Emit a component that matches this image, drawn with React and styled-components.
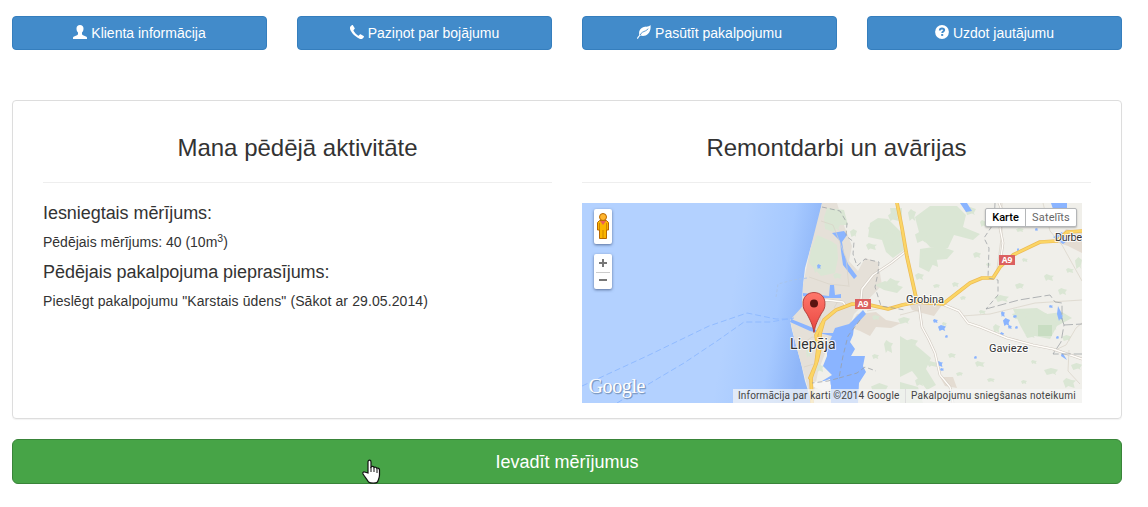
import React from 'react';
import styled, { createGlobalStyle } from 'styled-components';

const Global = createGlobalStyle`
  * { box-sizing: border-box; }
  body { margin: 0; background: #fff; color: #333; font: 14px/20px "Liberation Sans", Arial, sans-serif; }
`;
const Page = styled.main`
  width: 1134px; height: 507px; padding: 16px 12px 0; overflow: hidden;
`;
const Nav = styled.nav`
  display: grid; grid-template-columns: repeat(4, 1fr); gap: 30px; margin-bottom: 50px;
`;
const NavButton = styled.button`
  display: flex; align-items: center; justify-content: center; gap: 4px;
  height: 34px; padding: 0; color: #fff; background: #428bca;
  border: 1px solid #357ebd; border-radius: 4px; font: inherit;
  svg { width: 14px; height: 14px; margin-top: -2px; flex: none; }
`;
const Label = styled.span`white-space: nowrap;`;
const Panel = styled.section`
  display: grid; grid-template-columns: 1fr 1fr; gap: 30px; height: 319px; padding: 34px 30px 0;
  border: 1px solid #ddd; border-radius: 4px; box-shadow: 0 1px 1px rgba(0,0,0,.05);
`;
const Column = styled.div`min-width: 0;`;
const Title = styled.h3`
  margin: 0; height: 48px; font-size: 24px; line-height: 26px; font-weight: 400; text-align: center;
  border-bottom: 1px solid #eee; margin-bottom: 20px;
`;
const Subtitle = styled.h4`
  margin: 0 0 9px; font-size: 18px; line-height: 20px; font-weight: 400; letter-spacing: -.05px;
`;
const Text = styled.p`
  margin: 0 0 10px; line-height: 20px; letter-spacing: ${(p) => p.$track || 0}px;
  sup { font-size: 10.5px; line-height: 0; position: relative; vertical-align: baseline; top: -.5em; }
`;
const Submit = styled.button`
  position: relative; display: block; width: 100%; height: 45px; margin-top: 20px; padding: 0; color: #fff;
  background: #47a447; border: 1px solid #398439; border-radius: 6px;
  font: 18px/24px "Liberation Sans", Arial, sans-serif;
`;
const Pointer = styled.svg`position: absolute; left: 348px; top: 19px; width: 20px; height: 25px;`;

const MapFrame = styled.div`
  position: relative; width: 500px; height: 200px; overflow: hidden; background: #b3d1ff;
  font-family: Roboto, sans-serif;
`;
const MapDrawing = styled.svg`display: block; width: 500px; height: 200px;`;
const Controls = styled.div`
  position: absolute; left: 12px; top: 6px; display: flex; flex-direction: column; gap: 10px;
`;
const Control = styled.div`
  width: 18px; height: 35px; background: #fff; border-radius: 2px;
  box-shadow: 0 1px 3px rgba(60,80,120,.75); display: flex; flex-direction: column; align-items: center;
`;
const MapTypes = styled.div`
  position: absolute; right: 5px; top: 5px; display: flex; height: 19px; background: #fff;
  border: 1px solid #b4b6b8; border-radius: 2px; box-shadow: 0 1px 2px rgba(0,0,0,.25);
`;
const MapType = styled.span`
  width: ${(p) => p.$w}px; text-align: center; font-size: 11px; line-height: 18px;
  color: ${(p) => (p.$active ? '#000' : '#666')}; font-weight: ${(p) => (p.$active ? 500 : 400)};
  letter-spacing: ${(p) => (p.$active ? 0 : 0.15)}px;
  & + & { border-left: 1px solid #b4b6b8; }
`;
const Attribution = styled.div`
  position: absolute; right: 0; bottom: 0; display: flex; width: 349px; height: 14px; padding-left: 5px;
  background: rgba(245,245,245,.72); color: #444; font-size: 10px; line-height: 14px; white-space: nowrap;
`;
const Credit = styled.span`
  width: ${(p) => p.$w}px; letter-spacing: ${(p) => p.$track}px;
  & + & { padding-left: 5px; border-left: 1px solid #ddd; }
`;

const UserIcon = () => (
  <svg viewBox="0 0 14 14" fill="#fff"><path d="M3.500 3.500C3.500 1.300 4.800 0 7 0s3.500 1.300 3.500 3.500c0 1.800-.6 3.200-1.500 4.100v1.200c0 .7.400 1.200 1 1.500l3 1.200c.7.300 1 .7 1 1.300V14H0v-1.200c0-.6.300-1 1-1.300l3-1.200c.6-.3 1-.8 1-1.500V7.600C4.100 6.700 3.500 5.300 3.500 3.500Z" /></svg>
);
const PhoneIcon = () => (
  <svg viewBox="0 0 14 14" fill="#fff"><path d="M.2 1.800 1.800.2c.4-.4.800-.3 1.100.1l1.700 2.700c.3.400.2.800-.1 1.100L3.400 5.200c.6 1.800 3.400 4.800 5.200 5.500l1.200-1.200c.4-.3.800-.4 1.200-.1l2.600 1.700c.4.300.5.700.2 1.100l-1.500 1.500c-.8.600-1.900.3-3.200-.3C5.500 12 1.300 8 .2 4.600-.2 3.400-.1 2.400.2 1.800Z" /></svg>
);
const LeafIcon = () => (
  <svg viewBox="0 0 14 14"><path fill="#fff" d="M13.500 0c.5 3.600-.4 6.600-2.400 8.700-1.900 2-4.600 2.600-7.400 1.900-1.100.6-1.900 1.700-2.500 2.900-.2.500-1.400.4-1.200-.2.300-1.100 1.200-2.200 2.300-3.400C1.600 6.800 2.500 4.500 4.700 2.900 7.100 1.200 11.700 2.300 13.500 0Z" /><path d="M3.200 10.100c1-3 3.400-3.300 5.200-4.200 1.200-.6 2-1.300 2.900-2.300" fill="none" stroke="#428bca" strokeWidth=".85" /></svg>
);
const QuestionIcon = () => (
  <svg viewBox="0 0 14 14"><circle cx="7" cy="7" r="6.900" fill="#fff" /><path fill="none" stroke="#428bca" strokeWidth="1.900" d="M4.800 5.500C4.800 4 5.600 3.500 7 3.500s2.200.6 2.200 1.600c0 1.500-2 1.400-2 2.900" /><path fill="#428bca" d="M6.200 9h2v1.900h-2z" /></svg>
);

// Small wooded patches: x, y, width, height.
const woods = [
  [306, 10, 12, 8], [286, 22, 14, 9], [301, 29, 12, 13], [284, 40, 11, 7], [326, 6, 8, 12], [333, 28, 12, 12],
  [340, 46, 18, 18], [333, 70, 9, 7], [383, 4, 11, 8], [398, 17, 8, 7], [391, 49, 8, 6], [351, 81, 7, 4],
  [305, 75, 13, 12], [290, 112, 8, 5], [316, 114, 12, 7], [302, 137, 9, 13], [290, 151, 7, 5], [289, 180, 17, 12],
  [315, 185, 17, 13], [333, 175, 9, 8], [323, 136, 13, 7], [345, 158, 11, 6], [366, 150, 8, 5], [374, 169, 7, 4],
  [393, 158, 10, 6], [405, 175, 8, 4], [386, 190, 12, 7], [417, 187, 8, 10], [439, 177, 6, 4], [462, 165, 14, 7],
  [481, 175, 13, 10], [466, 190, 9, 7], [489, 160, 11, 7], [449, 157, 6, 4], [413, 92, 14, 7], [433, 80, 9, 6],
  [462, 71, 10, 7], [476, 85, 9, 7], [430, 109, 17, 7], [452, 108, 13, 9], [468, 117, 7, 10], [443, 130, 11, 5],
  [397, 107, 7, 4], [411, 121, 7, 9], [493, 54, 7, 12], [484, 65, 8, 5], [434, 25, 8, 4], [447, 15, 9, 7],
  [440, 55, 6, 4], [370, 79, 7, 5], [378, 93, 6, 4], [360, 119, 5, 4], [404, 60, 5, 3], [480, 132, 9, 6],
  [234, 161, 8, 8], [224, 143, 5, 12], [246, 17, 13, 11], [231, 58, 10, 12], [251, 70, 9, 6], [268, 26, 7, 8],
];
const ponds = [
  [351, 116, 5, 4], [356, 122, 8, 6], [363, 132, 3, 3], [419, 108, 4, 6], [421, 115, 7, 8], [431, 112, 4, 3],
  [426, 122, 4, 4], [418, 129, 4, 5], [433, 123, 3, 3], [467, 102, 4, 3], [453, 25, 3, 3], [435, 45, 2, 4],
  [355, 158, 6, 6], [358, 165, 4, 3], [474, 133, 3, 3], [477, 111, 4, 6], [235, 61, 4, 5], [392, 153, 3, 3],
];
const patch = ([x, y, w, h], i) => {
  const k = (i % 3) * 0.12;
  return `M${x} ${y + h * 0.3}L${x + w * (0.25 + k)} ${y}L${x + w * 0.65} ${y + h * (0.2 - k / 2)}L${x + w} ${y + h * 0.25}L${x + w * 0.8} ${y + h * (0.5 + k)}L${x + w * 0.9} ${y + h}L${x + w * (0.4 + k)} ${y + h * 0.8}L${x + w * 0.2} ${y + h}Z`;
};
const coast = 'M240 0L237 15 233 31 228 47 223 65 221 82 220 104 216 112 208 117 210 127 214 142 219 160 223 178 230 200';
const highway = 'M230 200L229 175 235 158 238 145 238 131 242 117 254 107 270 101 288 102 306 106 320 102 335 99 361 101 388 80 400 75 411 75 418 64 431 52 458 39 475 38 485 29 500 28';
const northRoad = 'M315 0L320 25 325 54 335 99';
const bypass = 'M242 117L234 132 236 145 234 161 228 175';

const MapArtwork = () => (
  <MapDrawing viewBox="0 0 500 200">
    <defs>
      <linearGradient id="sea" gradientUnits="userSpaceOnUse" x1="150" y1="90" x2="228" y2="104">
        <stop stopColor="#b3d1ff" /><stop offset=".6" stopColor="#a6c9ff" /><stop offset="1" stopColor="#8fb6f8" />
      </linearGradient>
      <linearGradient id="pin" x2="0" y2="1"><stop stopColor="#ff776b" /><stop offset="1" stopColor="#e84640" /></linearGradient>
    </defs>
    <rect width="500" height="200" fill="url(#sea)" />
    <path d={`${coast}H500V0Z`} fill="#f0efea" />
    <path d="M240 0L228 47 221 82 220 104 208 117 214 142 230 200 236 169 247 140 267 125 272 111 282 101 300 82 296 59 283 55 276 68 267 58 270 43 261 20 255 0Z" fill="#e5e0d8" />
    <path d="M267 124L275 111 294 109 304 117 319 120 309 125 294 124 288 133 278 128ZM326 99L343 96 360 102 352 113 340 110 330 107ZM358 174L371 174 375 185 363 183ZM474 39L484 26 500 28 500 50 486 43Z" fill="#e4dcd2" />
    <g fill="#dae6d4">
      <path d="M245 5L262 7 266 22 257 22 252 29 243 26 242 14ZM235 32L249 38 255 42 256 55 253 70 239 73 227 60 229 46ZM288 20L296 15 306 16 319 29 322 47 311 55 304 49 300 37 286 34ZM333 14L348 3 375 3 384 12 381 24 398 31 391 37 372 32 366 45 348 44 338 33ZM338 46L358 43 372 48 365 56 353 57 347 69 337 64ZM318 133L336 144 349 155 344 166 354 182 345 187 330 168 318 174ZM318 179L336 184 341 200 318 200ZM308 5H320V15L309 12ZM293 82L303 78 321 84 315 90 302 87ZM431 106L455 105 465 111 480 109 490 115 475 123 468 136 443 131 438 122Z" />
      <path d={woods.map(patch).join('')} />
      <path d="M456 122h14v11h-14z" fill="#c8ddc2" />
    </g>
    <g fill="#8ab4ff">
      <path d="M250 30L262 28 265 32 260 39 262 51 266 61 275 73 272 76 261 62 259 48 258 38ZM221 90L247 93 248 82 252 82 253 92 259 91 259 95 231 95 221 93ZM209 116L229 124 239 130 251 130 253 125 267 121 281 107 284 111 272 124 271 132 268 139 273 146 269 153 277 153 283 153 281 163 284 169 277 180 276 200 249 200 249 182 240 178 250 172 241 163 245 153 245 143 250 133 228 128 208 119Z" />
      <path d="M378 0H385L390 8 384 9ZM469 0H485V5L471 6ZM471 34L480 29 485 38 481 41ZM476 103L480 111 477 118 475 111ZM480 149L485 157 479 153Z" />
      <path d={ponds.map(patch).join('')} />
    </g>
    <path d="M242 178L248 176 249 185 243 189 230 183 230 179Z" fill="#f7f6f4" />
    <g fill="none" stroke="#d8d2c7" strokeWidth=".7">
      <path d="M239 18L251 22 264 55 267 84M227 74L247 81 266 83M221 96L240 108 237 122M256 98L252 105M285 108L308 104M318 112L337 107M380 113L408 111 453 100 500 97M420 0V28L415 66M461 0L468 28 480 42 500 78M487 147L486 168 498 181M471 148L484 142 494 125 500 120M220 141L230 134 240 135M222 164L235 160" />
    </g>
    <g fill="none" strokeLinecap="round" strokeLinejoin="round">
      <path d="M323 49L309 60 291 72 280 86 279 96M221 98L245 97 261 99 264 103M337 103L340 124 347 137 353 150 358 172 368 184 371 200M360 101L377 108 386 120 398 124 425 135 451 142 471 146 500 156M417 0L422 12 418 25 421 40 418 62" stroke="#d0c9c1" strokeWidth="2.600" />
      <path d="M323 49L309 60 291 72 280 86 279 96M221 98L245 97 261 99 264 103M337 103L340 124 347 137 353 150 358 172 368 184 371 200M360 101L377 108 386 120 398 124 425 135 451 142 471 146 500 156M417 0L422 12 418 25 421 40 418 62" stroke="#fffdf9" strokeWidth="1.400" />
      <path d={highway + northRoad + bypass} stroke="#ecba55" strokeWidth="3.700" />
      <path d={highway + northRoad + bypass} stroke="#fbd565" strokeWidth="2.300" />
    </g>
    <g fill="none" stroke="#9a9da1" strokeWidth=".75" strokeDasharray="5 3">
      <path d="M240 4L258 8 265 20 264 33 272 39 271 51 275 63 283 56 297 59 296 70 293 84 299 103 323 107M278 117L266 133 261 153 257 175 246 178 230 180M257 175L275 170 283 164 294 168M413 0L412 20 402 35 407 45 406 75 416 77 416 92 404 106" />
      <path d="M404 106L437 97 468 92 473 99 480 100 480 116 482 122 479 139 471 151H500M482 122L500 121" strokeDasharray="9 3" />
    </g>
    <g fill="none" stroke="#8cb8ff" strokeWidth=".9" strokeDasharray="6 3">
      <path d="M0 183L65 153 127 123 165 110 194 116 211 116M35 200L70 179 102 160 135 138 162 119 188 119 212 115" />
      <path d="M225 75L211 77 196 81 194 94" stroke="#a9c3e8" strokeDasharray="3 2" />
    </g>
    <g fontFamily='"Open Sans", sans-serif' fontWeight="700" fontSize="8.500" fill="#fff" textAnchor="middle">
      <path d="M273 96h16v10h-16zM417 52h16v10h-16z" fill="#db6060" />
      <text x="281" y="104">A9</text><text x="425" y="60">A9</text>
    </g>
    <g fontFamily="Roboto, sans-serif" fill="#333" stroke="#fff" strokeWidth="2" strokeOpacity=".8" paintOrder="stroke" strokeLinejoin="round">
      <text x="208" y="146" fontSize="14" textLength="45.500">Liepāja</text>
      <text x="324" y="99.500" fontSize="11" textLength="38">Grobiņa</text>
      <text x="407" y="149" fontSize="11" textLength="39">Gavieze</text>
      <text x="473" y="38" fontSize="11" textLength="27">Durbe</text>
    </g>
    <path d="M232 129.500C230.500 121 228 117 225 111 222 107 221 105 221 100.500 221 94 225.500 89.500 232 89.500S243 94 243 100.500C243 105 242 107 239 111 236 117 233.500 121 232 129.500Z" fill="url(#pin)" stroke="#a72e2b" strokeWidth=".8" />
    <circle cx="232" cy="100.500" r="4" fill="#591411" />
    <g fontFamily='"Liberation Serif", serif' fontSize="20">
      <text x="7.500" y="190.500" textLength="57" fill="#7f9cc4" stroke="#7f9cc4" strokeWidth=".5">Google</text>
      <text x="6.500" y="189.500" textLength="57" fill="#fff">Google</text>
    </g>
  </MapDrawing>
);

export default function App() {
  return (
    <>
      <Global />
      <Page>
        <Nav>
          <NavButton><UserIcon /><Label>Klienta informācija</Label></NavButton>
          <NavButton><PhoneIcon /><Label>Paziņot par bojājumu</Label></NavButton>
          <NavButton><LeafIcon /><Label>Pasūtīt pakalpojumu</Label></NavButton>
          <NavButton><QuestionIcon /><Label>Uzdot jautājumu</Label></NavButton>
        </Nav>
        <Panel>
          <Column>
            <Title>Mana pēdējā aktivitāte</Title>
            <Subtitle>Iesniegtais mērījums:</Subtitle>
            <Text>Pēdējais mērījums: 40 (10m<sup>3</sup>)</Text>
            <Subtitle>Pēdējais pakalpojuma pieprasījums:</Subtitle>
            <Text $track={0.105}>Pieslēgt pakalpojumu "Karstais ūdens" (Sākot ar 29.05.2014)</Text>
          </Column>
          <Column>
            <Title>Remontdarbi un avārijas</Title>
            <MapFrame>
              <MapArtwork />
              <Controls>
                <Control>
                  <svg width="16" height="35" viewBox="0 0 16 35"><path d="M4.500 11.500h7l2 2V21h-2v8.500h-7V21h-2v-7.500Z" fill="#fbb500" stroke="#b76700" /><circle cx="8" cy="8" r="3.500" fill="#ffb52e" stroke="#b76700" /><path d="M5 12h6l-3 4Z" fill="#e9605a" /><path d="M8 21v8M4.500 14v7M11.500 14v7" stroke="#c47c00" strokeWidth=".8" /></svg>
                </Control>
                <Control>
                  <svg width="18" height="35" viewBox="0 0 18 35"><path d="M5 9h8M9 5v8M5 26h8" stroke="#777" strokeWidth="2" /><path d="M2 18.500h14" stroke="#ccc" /></svg>
                </Control>
              </Controls>
              <MapTypes><MapType $w={39} $active>Karte</MapType><MapType $w={51}>Satelīts</MapType></MapTypes>
              <Attribution>
                <Credit $w={167} $track={0.14}>Informācija par karti ©2014 Google</Credit>
                <Credit $w={176} $track={0.22}>Pakalpojumu sniegšanas noteikumi</Credit>
              </Attribution>
            </MapFrame>
          </Column>
        </Panel>
        <Submit>
          Ievadīt mērījumus
          <Pointer viewBox="0 0 20 25"><path d="M7 14V3c0-2.500 3-2.500 3 0v5c1-1 2.700-.7 3 .5 1-.7 2.600-.3 2.800.8 1.200-.5 2.600.2 2.700 1.600V16c0 3-1 4-2 7-1.500 1.500-7 1.500-9 0-2-3-4-5.500-5.500-8-.7-2 1-2.700 2.500-1.700Z" fill="#fff" stroke="#111" strokeWidth="1.200" /><path d="M10 8v5M13 9v4M16 10v4" stroke="#111" /></Pointer>
        </Submit>
      </Page>
    </>
  );
}
